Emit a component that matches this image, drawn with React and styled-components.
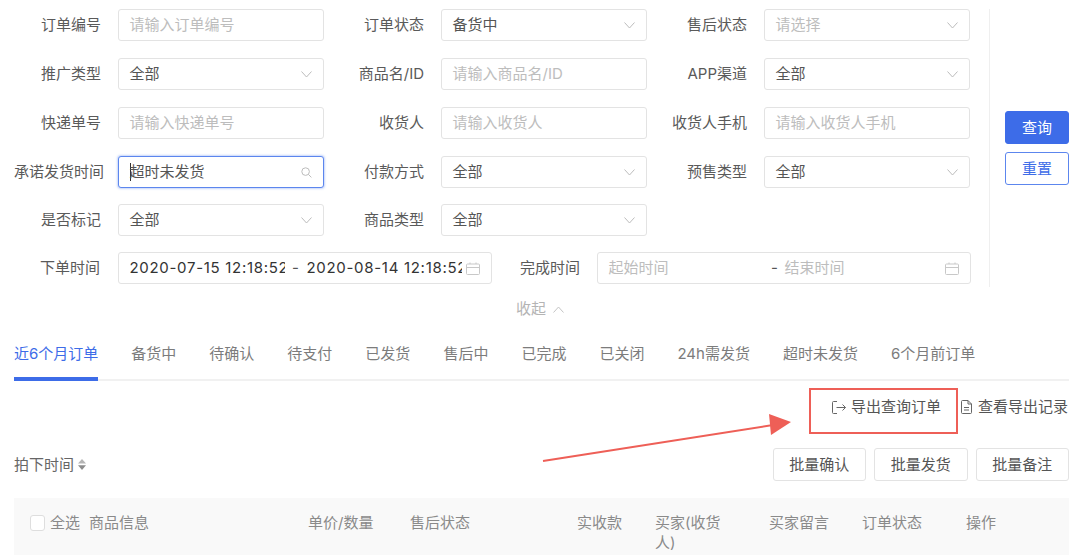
import React from "react";
import styled, { createGlobalStyle } from "styled-components";

const Global = createGlobalStyle`
  html, body { margin: 0; padding: 0; background: #fff; }
  * { box-sizing: border-box; }
  body { font-family: "Inter", "Noto Sans CJK SC", sans-serif; font-size: 15px; line-height: 20px; color: #555; }
`;

const Page = styled.div`
  position: relative;
  width: 1080px;
  height: 555px;
  overflow: hidden;
  background: #fff;
`;
const FilterArea = styled.div`
  display: flex;
  padding-top: 9px;
`;
const Fields = styled.div`
  width: 971px;
  padding-left: 1px;
  display: flex;
  flex-direction: column;
`;
const FieldRow = styled.div`
  display: grid;
  grid-template-columns: repeat(3, 323px);
  margin-bottom: ${(p) => p.$gap ?? 17}px;
`;
const DateRow = styled.div`
  display: flex;
  align-items: center;
`;
const Field = styled.div`
  display: flex;
  align-items: center;
  height: 32px;
`;
const Label = styled.label`
  flex: 0 0 ${(p) => p.$width ?? 100}px;
  margin-right: ${(p) => p.$gap ?? 17}px;
  text-align: right;
  white-space: nowrap;
  color: #5a5a5a;
`;
const Control = styled.div`
  display: flex;
  align-items: center;
  justify-content: space-between;
  width: ${(p) => p.$width ?? 206.5}px;
  height: 32px;
  padding: 0 11px 0 10.5px;
  border: 1.5px solid ${(p) => (p.$focus ? "#5c86ee" : "#e3e3e3")};
  border-radius: 3px;
  box-shadow: ${(p) => (p.$focus ? "0 0 2px 1px rgba(92,134,238,.35)" : "none")};
  background: #fff;
  white-space: nowrap;
`;
const Value = styled.span`
  color: ${(p) => (p.$placeholder ? "#bdbdbd" : "#555")};
`;
const Caret = styled.span`
  display: inline-block;
  width: 1px;
  height: 18px;
  margin-right: -1px;
  background: #333;
  vertical-align: -4px;
`;
const ClippedDate = styled.span`
  width: ${(p) => p.$width}px;
  flex: none;
  overflow: hidden;
  color: #333;
  letter-spacing: 0.7px;
`;
const DateDash = styled.span`
  flex: none;
  width: ${(p) => p.$width}px;
  text-align: center;
  color: #555;
`;
const EmptyDate = styled.span`
  flex: none;
  width: ${(p) => p.$width}px;
  color: #bdbdbd;
`;
const Spacer = styled.span`
  flex: 1;
`;
const Divider = styled.div`
  width: 1px;
  height: 278px;
  margin-left: 18px;
  background: #efefef;
`;
const Actions = styled.div`
  display: flex;
  flex-direction: column;
  gap: 8px;
  margin: 102px 0 0 15px;
`;
const SearchButton = styled.button`
  width: 64px;
  height: 33px;
  border-style: solid;
  border-color: ${(p) => (p.$primary ? "#3d6ce8" : "#5c86ee")};
  border-width: ${(p) => (p.$primary ? 1 : 1.5)}px;
  border-radius: 3px;
  background: ${(p) => (p.$primary ? "#3d6ce8" : "#fff")};
  color: ${(p) => (p.$primary ? "#fff" : "#3d6ce8")};
  font: inherit;
  padding: 0;
`;
const Collapse = styled.div`
  display: flex;
  justify-content: center;
  align-items: center;
  gap: 7px;
  margin-top: 12px;
  color: #b4b4b4;
`;
const Tabs = styled.div`
  display: flex;
  gap: 33px;
  margin: 25px 11px 0 14px;
  border-bottom: 2px solid #f1f1f1;
`;
const Tab = styled.div`
  padding-bottom: 13px;
  white-space: nowrap;
  color: ${(p) => (p.$active ? "#3d6ce8" : "#7c7c7c")};
  margin-bottom: -2px;
  border-bottom: 4px solid ${(p) => (p.$active ? "#3d6ce8" : "transparent")};
`;
const ExportRow = styled.div`
  display: flex;
  justify-content: flex-end;
  gap: 20px;
  margin-top: 16px;
  padding-right: 12px;
`;
const ExportLink = styled.a`
  display: flex;
  align-items: center;
  gap: ${(p) => p.$gap}px;
  color: #555;
`;
const Toolbar = styled.div`
  display: flex;
  align-items: center;
  justify-content: space-between;
  margin: 31px 11px 0 14px;
`;
const SortLabel = styled.div`
  display: flex;
  align-items: center;
  gap: 4px;
  color: #666;
`;
const BatchGroup = styled.div`
  display: flex;
  gap: 8px;
`;
const BatchButton = styled.button`
  width: 93.5px;
  height: 33px;
  border: 1.5px solid #e3e3e3;
  border-radius: 3px;
  background: #fff;
  color: #555;
  font: inherit;
  padding: 0;
`;
const TableHead = styled.div`
  display: grid;
  grid-template-columns: 59px 219px 102px 167px 78px 114px 93px 104px 1fr;
  height: 70px;
  margin: 17px 11px 0 14px;
  padding: 15px 0 0 16px;
  background: #f9f9f9;
  color: #8a8a8a;
`;
const SelectAll = styled.div`
  display: flex;
  align-items: flex-start;
  gap: 5px;
`;
const Checkbox = styled.span`
  flex: none;
  width: 15px;
  height: 16px;
  margin-top: 2px;
  border: 1.5px solid #dedede;
  border-radius: 3px;
  background: #fff;
`;
const HeadCell = styled.div`
  max-width: ${(p) => p.$max ?? 200}px;
`;
const ExportHighlight = styled.div`
  position: absolute;
  left: 809px;
  top: 388px;
  width: 149px;
  height: 46px;
  border: 2px solid #ee5f57;
  pointer-events: none;
`;
const ArrowMark = styled.svg`
  position: absolute;
  left: 535px;
  top: 405px;
  pointer-events: none;
`;

const Chevron = ({ up }) => (
  <svg width="11" height="7" viewBox="0 0 11 7" fill="none" stroke={up ? "#c4c4c4" : "#bcbcbc"} strokeWidth="1">
    <path d={up ? "M.5 6.5 5.5 1l5 5.5" : "M.5.5 5.5 6l5-5.5"} />
  </svg>
);
const SearchIcon = () => (
  <svg width="11" height="11" viewBox="0 0 11 11" fill="none" stroke="#bcbcbc" strokeWidth="1">
    <circle cx="4.6" cy="4.6" r="3.8" />
    <path d="m7.4 7.4 3 3" />
  </svg>
);
const Calendar = () => (
  <svg width="14" height="13" viewBox="0 0 14 13" fill="none" stroke="#c8c8c8" strokeWidth="1">
    <rect x=".5" y="2" width="13" height="10.5" rx="1" />
    <path d="M.5 5.5h13M4 .5V2M10 .5V2" />
  </svg>
);
const SortIcon = () => (
  <svg width="8" height="11" viewBox="0 0 8 11" fill="#8c8c8c">
    <path d="M4 0 8 4.6H0z" fill="#b5b5b5" />
    <path d="M0 6.2h8L4 11z" />
  </svg>
);
const ExportIcon = () => (
  <svg width="14" height="13" viewBox="0 0 14 13" fill="none" stroke="#666" strokeWidth="1">
    <path d="M5 .5H1.5a1 1 0 0 0-1 1v10a1 1 0 0 0 1 1H5M4.5 6.5h9M10.5 3.5l3 3-3 3" />
  </svg>
);
const DocIcon = () => (
  <svg width="11" height="14" viewBox="0 0 11 14" fill="none" stroke="#666" strokeWidth="1">
    <path d="M7 .5H1.5a1 1 0 0 0-1 1v11a1 1 0 0 0 1 1h8a1 1 0 0 0 1-1V4zM7 .5V4h3.5M3 7.5h5M3 10h5" />
  </svg>
);

const TextField = ({ label, placeholder }) => (
  <Field>
    <Label>{label}</Label>
    <Control><Value $placeholder>{placeholder}</Value></Control>
  </Field>
);
const SelectField = ({ label, value, placeholder }) => (
  <Field>
    <Label>{label}</Label>
    <Control>
      <Value $placeholder={placeholder}>{value}</Value>
      <Chevron />
    </Control>
  </Field>
);

const tabs = ["备货中", "待确认", "待支付", "已发货", "售后中", "已完成", "已关闭", "24h需发货", "超时未发货", "6个月前订单"];

export default function App() {
  return (
    <Page>
      <Global />
      <FilterArea>
        <Fields>
          <FieldRow>
            <TextField label="订单编号" placeholder="请输入订单编号" />
            <SelectField label="订单状态" value="备货中" />
            <SelectField label="售后状态" value="请选择" placeholder />
          </FieldRow>
          <FieldRow>
            <SelectField label="推广类型" value="全部" />
            <TextField label="商品名/ID" placeholder="请输入商品名/ID" />
            <SelectField label="APP渠道" value="全部" />
          </FieldRow>
          <FieldRow>
            <TextField label="快递单号" placeholder="请输入快递单号" />
            <TextField label="收货人" placeholder="请输入收货人" />
            <TextField label="收货人手机" placeholder="请输入收货人手机" />
          </FieldRow>
          <FieldRow $gap={16}>
            <Field>
              <Label $width={103} $gap={14}>承诺发货时间</Label>
              <Control $focus>
                <Value><Caret />超时未发货</Value>
                <SearchIcon />
              </Control>
            </Field>
            <SelectField label="付款方式" value="全部" />
            <SelectField label="预售类型" value="全部" />
          </FieldRow>
          <FieldRow $gap={16}>
            <SelectField label="是否标记" value="全部" />
            <SelectField label="商品类型" value="全部" />
          </FieldRow>
          <DateRow>
            <Field>
              <Label $width={99} $gap={18}>下单时间</Label>
              <Control $width={374}>
                <ClippedDate $width={155}>2020-07-15 12:18:52</ClippedDate>
                <DateDash $width={22}>-</DateDash>
                <ClippedDate $width={155}>2020-08-14 12:18:52</ClippedDate>
                <Spacer />
                <Calendar />
              </Control>
            </Field>
            <Field>
              <Label $width={88} $gap={17}>完成时间</Label>
              <Control $width={374}>
                <EmptyDate $width={156}>起始时间</EmptyDate>
                <DateDash $width={20}>-</DateDash>
                <EmptyDate $width={100}>结束时间</EmptyDate>
                <Spacer />
                <Calendar />
              </Control>
            </Field>
          </DateRow>
        </Fields>
        <Divider />
        <Actions>
          <SearchButton $primary>查询</SearchButton>
          <SearchButton>重置</SearchButton>
        </Actions>
      </FilterArea>

      <Collapse>收起 <Chevron up /></Collapse>

      <Tabs>
        <Tab $active>近6个月订单</Tab>
        {tabs.map((t) => <Tab key={t}>{t}</Tab>)}
      </Tabs>

      <ExportRow>
        <ExportLink $gap={5}><ExportIcon />导出查询订单</ExportLink>
        <ExportLink $gap={6}><DocIcon />查看导出记录</ExportLink>
      </ExportRow>

      <Toolbar>
        <SortLabel>拍下时间<SortIcon /></SortLabel>
        <BatchGroup>
          <BatchButton>批量确认</BatchButton>
          <BatchButton>批量发货</BatchButton>
          <BatchButton>批量备注</BatchButton>
        </BatchGroup>
      </Toolbar>

      <TableHead>
        <SelectAll><Checkbox />全选</SelectAll>
        <HeadCell>商品信息</HeadCell>
        <HeadCell>单价/数量</HeadCell>
        <HeadCell>售后状态</HeadCell>
        <HeadCell>实收款</HeadCell>
        <HeadCell $max={72}>买家(收货人)</HeadCell>
        <HeadCell>买家留言</HeadCell>
        <HeadCell>订单状态</HeadCell>
        <HeadCell>操作</HeadCell>
      </TableHead>

      <ExportHighlight />
      <ArrowMark width="265" height="65" viewBox="0 0 265 65">
        <path d="M8 56 238 20" stroke="#ee5f57" strokeWidth="2" fill="none" />
        <path d="M234 9 256 17 236 30z" fill="#ee5f57" />
      </ArrowMark>
    </Page>
  );
}
